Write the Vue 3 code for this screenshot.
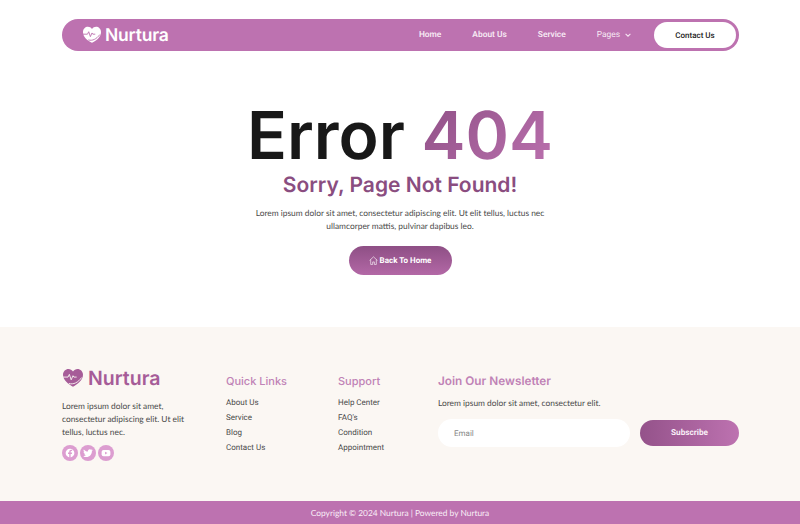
<script setup>
const quickLinks = ['About Us', 'Service', 'Blog', 'Contact Us']
const supportLinks = ['Help Center', "FAQ's", 'Condition', 'Appointment']
const navLinks = ['Home', 'About Us', 'Service']
</script>

<template>
  <div class="page">
    <header class="top">
      <nav class="navbar">
        <a class="brand">
          <svg class="heart" viewBox="0 0 24 22" width="20" height="18">
            <path fill="#fff" d="M12 20.500C7 18 1 13.500 1 7.500 1 3.500 4 1 7 1c2 0 3.800 1 5 2.800C13.200 2 15 1 17 1c3 0 6 2.500 6 6.500 0 6-6 10.500-11 13z" />
            <path fill="none" stroke="#bd72b0" stroke-width="1.100" d="M1 10h5.500l1.500-3 2 6 2-4.500 1 1.500h3M7.500 17c5 1.500 10-1 14-6.500" />
          </svg>
          <span>Nurtura</span>
        </a>
        <ul class="nav-links">
          <li v-for="link in navLinks" :key="link">{{ link }}</li>
          <li class="pages">
            Pages
            <svg viewBox="0 0 10 6" width="6" height="4"><path d="M1 1l4 4 4-4" fill="none" stroke="#f5e3f1" stroke-width="1.800" /></svg>
          </li>
        </ul>
        <button class="contact">Contact Us</button>
      </nav>
    </header>

    <main class="error">
      <h1>Error <span class="num">404</span></h1>
      <h2>Sorry, Page Not Found!</h2>
      <p>Lorem ipsum dolor sit amet, consectetur adipiscing elit. Ut elit tellus, luctus nec ullamcorper mattis, pulvinar dapibus leo.</p>
      <button class="back">
        <svg viewBox="0 0 16 16" width="9" height="9" fill="none" stroke="#fff" stroke-width="1.100">
          <path d="M1 8l7-6.500L15 8M3 6.500V15h3.500v-4.500h3V15H13V6.500" />
        </svg>
        Back To Home
      </button>
    </main>

    <footer class="footer">
      <div class="footer-inner">
        <div class="about">
          <a class="foot-brand">
            <svg viewBox="0 0 24 22" width="22" height="20">
              <path fill="#a65c98" d="M12 20.500C7 18 1 13.500 1 7.500 1 3.500 4 1 7 1c2 0 3.800 1 5 2.800C13.200 2 15 1 17 1c3 0 6 2.500 6 6.500 0 6-6 10.500-11 13z" />
              <path fill="none" stroke="#faf6f2" stroke-width="1" d="M1 10h5.500l1.500-3 2 6 2-4.500 1 1.500h3M7.500 17c5 1.500 10-1 14-6.500" />
            </svg>
            <span>Nurtura</span>
          </a>
          <p>Lorem ipsum dolor sit amet, consectetur adipiscing elit. Ut elit tellus, luctus nec.</p>
          <div class="socials">
            <span class="social">
              <svg viewBox="0 0 16 16" width="10" height="10"><circle cx="8" cy="8" r="7" fill="#fff" /><path fill="#dc9dd0" d="M9 16V9.500h2l.4-2.300H9V6c0-.7.300-1.200 1.200-1.200h1.200V2.800C11 2.700 10.400 2.600 9.800 2.600 8 2.600 6.800 3.700 6.800 5.700v1.500H4.800v2.300h2V16z" /></svg>
            </span>
            <span class="social">
              <svg viewBox="0 0 16 16" width="10" height="10"><path fill="#fff" d="M15.500 3.300c-.6.300-1.200.4-1.800.5.600-.4 1.100-1 1.400-1.700-.6.400-1.300.6-2 .8a3.100 3.100 0 0 0-5.300 2.800C5.200 5.600 2.900 4.300 1.300 2.400c-.8 1.400-.4 3.200 1 4.100-.5 0-1-.2-1.400-.4 0 1.500 1.100 2.800 2.500 3.100-.5.100-.9.100-1.400 0 .4 1.200 1.500 2.100 2.900 2.100A6.300 6.300 0 0 1 .5 13c1.400.9 3.100 1.400 4.800 1.400 5.800 0 9.100-4.900 8.900-9.300.6-.4 1.100-1 1.300-1.800z" /></svg>
            </span>
            <span class="social">
              <svg viewBox="0 0 16 16" width="10" height="10"><rect x="1" y="3" width="14" height="10" rx="3" fill="#fff" /><path d="M6.500 5.800v4.400L10.300 8z" fill="#dc9dd0" /></svg>
            </span>
          </div>
        </div>

        <div class="links quick">
          <h4>Quick Links</h4>
          <ul><li v-for="link in quickLinks" :key="link">{{ link }}</li></ul>
        </div>

        <div class="links support">
          <h4>Support</h4>
          <ul><li v-for="link in supportLinks" :key="link">{{ link }}</li></ul>
        </div>

        <div class="newsletter">
          <h4>Join Our Newsletter</h4>
          <p>Lorem ipsum dolor sit amet, consectetur elit.</p>
          <form class="sub-form" @submit.prevent>
            <input type="text" placeholder="Email" />
            <button>Subscribe</button>
          </form>
        </div>
      </div>
    </footer>

    <div class="copyright">Copyright © 2024 Nurtura | Powered by Nurtura</div>
  </div>
</template>

<style>
body {
  background: #fff;
}
</style>

<style scoped>
.page {
  width: 800px;
  height: 524px;
  overflow: hidden;
  display: flex;
  flex-direction: column;
  font-family: Lato, sans-serif;
  text-rendering: geometricPrecision;
}

.page button,
.page input {
  text-rendering: geometricPrecision;
}

.top {
  padding: 19px 61px 0 62px;
  height: 51px;
  box-sizing: border-box;
}

.navbar {
  height: 32px;
  background: #bd72b0;
  border-radius: 16px;
  display: flex;
  align-items: center;
  padding: 0 3px 0 20px;
}

.brand {
  display: flex;
  align-items: center;
  gap: 3px;
  color: #fff;
  font-family: Inter, sans-serif;
  font-weight: 600;
  font-size: 17.500px;
  letter-spacing: -0.2px;
}

.nav-links {
  list-style: none;
  margin: 0 0 0 auto;
  padding: 0;
  display: flex;
  gap: 31px;
  font-family: Roboto, sans-serif;
  font-size: 8.400px;
  font-weight: 600;
  color: #f7e9f4;
}

.pages {
  font-weight: 400;
  display: flex;
  align-items: center;
  gap: 5px;
}

.contact {
  width: 82px;
  height: 26px;
  margin-left: 23px;
  border: none;
  border-radius: 13px;
  background: #fff;
  color: #222;
  font-family: Roboto, sans-serif;
  font-size: 8px;
  font-weight: 500;
}

.error {
  height: 276px;
  box-sizing: border-box;
  display: flex;
  flex-direction: column;
  align-items: center;
  text-align: center;
  padding-top: 46px;
}

.error h1 {
  margin: 0;
  font-family: Inter, sans-serif;
  font-size: 66px;
  line-height: 76px;
  font-weight: 600;
  color: #181818;
}

.num {
  background: linear-gradient(135deg, #8e4f85, #bd72b0);
  -webkit-background-clip: text;
  background-clip: text;
  color: transparent;
}

.error h2 {
  margin: -1px 0 0;
  font-family: Inter, sans-serif;
  font-size: 21px;
  line-height: 28px;
  font-weight: 600;
  color: #8a4d80;
}

.error p {
  width: 300px;
  margin: 7px 0 0;
  font-size: 8.400px;
  line-height: 13px;
  color: #4a4a4a;
}

.back {
  margin-top: 13px;
  width: 103px;
  height: 29px;
  border: none;
  border-radius: 15px;
  background: linear-gradient(180deg, #8e4f85, #b368a6);
  color: #fff;
  font-family: Roboto, sans-serif;
  font-size: 8px;
  font-weight: 700;
  display: flex;
  align-items: center;
  justify-content: center;
  gap: 2px;
}

.footer {
  height: 174px;
  background: #fbf7f3;
}

.footer-inner {
  padding: 40px 61px 0 62px;
  display: flex;
}

.about {
  flex: none;
  width: 164px;
}

.foot-brand {
  display: flex;
  align-items: center;
  gap: 4px;
  color: #a65c98;
  font-family: Inter, sans-serif;
  font-weight: 600;
  font-size: 19.500px;
  line-height: 22px;
}

.about p {
  margin: 11px 0 0;
  width: 130px;
  font-size: 8.400px;
  line-height: 13px;
  color: #4a4a4a;
}

.socials {
  display: flex;
  gap: 2px;
  margin-top: 6px;
}

.social {
  width: 16px;
  height: 16px;
  border-radius: 50%;
  background: #dc9dd0;
  display: flex;
  align-items: center;
  justify-content: center;
}

h4 {
  margin: 0;
  font-family: Inter, sans-serif;
  font-size: 11px;
  line-height: 16px;
  font-weight: 500;
  color: #c082b6;
}

.links ul {
  list-style: none;
  margin: 8px 0 0;
  padding: 0;
  display: flex;
  flex-direction: column;
  gap: 4px;
  font-family: Roboto, sans-serif;
  font-size: 8px;
  line-height: 11px;
  color: #4a4a4a;
}

.quick {
  flex: none;
  width: 112px;
  padding-top: 6px;
}

.support {
  flex: none;
  width: 100px;
  padding-top: 6px;
}

.newsletter {
  flex: 1;
  padding-top: 6px;
}

.newsletter h4 {
  font-size: 11.800px;
  font-weight: 600;
}

.newsletter p {
  margin: 8px 0 0;
  font-size: 8.400px;
  line-height: 13px;
  color: #4a4a4a;
}

.sub-form {
  margin-top: 9px;
  display: flex;
  align-items: center;
  gap: 10px;
}

.sub-form input {
  width: 192px;
  height: 28px;
  box-sizing: border-box;
  padding: 0 16px;
  border: none;
  border-radius: 14px;
  background: #fff;
  font-family: Roboto, sans-serif;
  font-size: 8px;
}

.sub-form input::placeholder {
  color: #888;
}

.sub-form button {
  width: 99px;
  height: 26px;
  border: none;
  border-radius: 13px;
  background: linear-gradient(90deg, #94528a, #bd72b0);
  color: #f9eef7;
  font-family: Roboto, sans-serif;
  font-size: 8.200px;
  font-weight: 700;
}

.copyright {
  height: 23px;
  background: #bd72b0;
  color: #f9eef7;
  font-size: 8.400px;
  display: flex;
  align-items: center;
  justify-content: center;
}
</style>
